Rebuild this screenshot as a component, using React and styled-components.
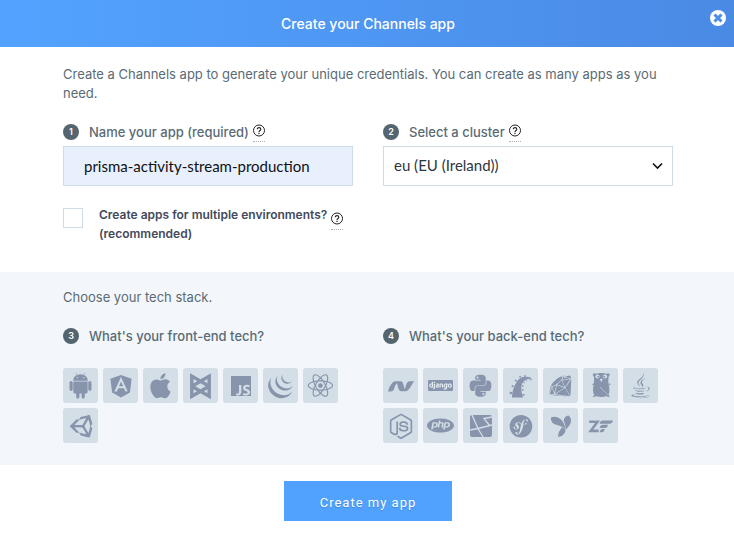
import React from "react";
import styled, { createGlobalStyle } from "styled-components";
import {
  DiAndroid,
  DiAngularSimple,
  DiApple,
  DiBackbone,
  DiJavascript1,
  DiJqueryLogo,
  DiReact,
  DiUnitySmall,
  DiDotnet,
  DiDjango,
  DiPython,
  DiRor,
  DiRuby,
  DiJava,
  DiNodejsSmall,
  DiSymfonyBadge,
  DiYii,
  DiZend,
} from "react-icons/di";
import { SiPhp } from "react-icons/si";

const GlobalStyle = createGlobalStyle`
  * { box-sizing: border-box; }
  body {
    margin: 0;
    background: #fff;
    color: #5a6b75;
    font-family: Inter, "Liberation Sans", sans-serif;
    font-size: 13px;
    line-height: 19px;
  }
`;

const Header = styled.header`
  display: grid;
  grid-template-columns: 40px 1fr 40px;
  align-items: center;
  height: 47px;
  color: #fff;
  background: linear-gradient(90deg, #52a3ff, #4a8ae5);
  box-shadow: 0 1px 2px #dbeafa;
`;

const Title = styled.h1`
  grid-column: 2;
  margin: 0;
  padding-left: 2px;
  text-align: center;
  font-size: 14px;
  font-weight: 500;
  line-height: 20px;
`;

const CloseButton = styled.button`
  align-self: start;
  justify-self: end;
  display: flex;
  margin: 10px 8px 0 0;
  padding: 0;
  border: 0;
  background: none;
  cursor: pointer;
`;

const Section = styled.section`
  padding: ${(p) => (p.$tinted ? "16px 61px 22px 63px" : "18px 61px 29px 63px")};
  background: ${(p) => (p.$tinted ? "#f3f7fb" : "#fff")};
`;

const Intro = styled.p`
  margin: 0;
`;

const Columns = styled.div`
  display: grid;
  grid-template-columns: 1fr 1fr;
  gap: 30px;
  margin-top: 17px;
`;

const FieldHead = styled.div`
  display: flex;
  align-items: center;
  height: 24px;
  margin-bottom: 2px;
`;

const Badge = styled.span`
  display: flex;
  align-items: center;
  justify-content: center;
  width: 16px;
  height: 16px;
  margin-right: 10px;
  border-radius: 50%;
  background: #55656f;
  color: #fff;
  font-size: 9px;
  font-weight: 600;
  line-height: 16px;
`;

const FieldLabel = styled.label`
  font-weight: 500;
`;

const GroupTitle = styled.h2`
  margin: 0;
  font-size: 13px;
  font-weight: 500;
`;

const HelpButton = styled.button`
  display: flex;
  flex: none;
  margin: 2px 0 0 4px;
  padding: 0 0 4px;
  border: 0;
  border-bottom: 1px dotted #a9b4bc;
  background: none;
  cursor: help;
`;

const NameInput = styled.input`
  display: block;
  width: 100%;
  height: 40px;
  padding: 0 20px;
  border: 1px solid #cfdce6;
  border-radius: 0;
  background: #e8f0fe;
  color: #111;
  font-family: Lato, sans-serif;
  font-size: 15px;
`;

const SelectWrap = styled.div`
  display: grid;
  align-items: center;
`;

const ClusterSelect = styled.select`
  grid-area: 1 / 1;
  appearance: none;
  width: 100%;
  height: 40px;
  padding: 0 30px 2px 10px;
  border: 1px solid #cfdce6;
  border-radius: 0;
  background: #fff;
  color: #2d3542;
  font-family: Lato, sans-serif;
  font-size: 15px;
`;

const Chevron = styled.svg`
  grid-area: 1 / 1;
  justify-self: end;
  margin-right: 10px;
  pointer-events: none;
`;

const CheckRow = styled.div`
  display: flex;
  align-items: flex-start;
  margin-top: 19px;
`;

const Checkbox = styled.input`
  appearance: none;
  flex: none;
  width: 20px;
  height: 20px;
  margin: 3px 16px 0 0;
  border: 1px solid #cfdce6;
  background: #fff;
  &:checked { background: #52a3ff; }
`;

const CheckLabel = styled.label`
  color: #434a5c;
  font-size: 12px;
  font-weight: 600;
`;

const HelpSlot = styled.div`
  padding-top: 5px;
`;

const Tiles = styled.div`
  display: flex;
  flex-wrap: wrap;
  gap: 5px;
  margin-top: 20px;
`;

const Tile = styled.button`
  display: flex;
  align-items: center;
  justify-content: center;
  width: 35px;
  height: 35px;
  padding: 0;
  border: 0;
  border-radius: 3px;
  background: #d3dee7;
  color: #8794ab;
  cursor: pointer;
`;

const Footer = styled.footer`
  display: flex;
  justify-content: center;
  padding: 16px 0 14px 2px;
`;

const SubmitButton = styled.button`
  width: 168px;
  height: 40px;
  padding: 3px 0 0;
  border: 0;
  background: #51a2ff;
  color: #fff;
  font-family: Roboto, sans-serif;
  font-size: 13px;
  font-weight: 400;
  letter-spacing: 1px;
  text-shadow: 0 1px 1px #3d86dc;
  cursor: pointer;
`;

const JsIcon = () => (
  <svg width="20" height="20" viewBox="0 0 20 20">
    <path fill="currentColor" d="M0 0h20v20H0z" />
    <DiJavascript1 x="2" y="4" size={20} color="#d3dee7" />
  </svg>
);

const DjangoIcon = () => (
  <svg width="25" height="11" viewBox="0 0 25 11">
    <rect width="25" height="11" rx="1" fill="currentColor" />
    <DiDjango x="1" y="-6" size={23} color="#e3ebf1" />
  </svg>
);

const LaravelIcon = () => (
  <svg width="35" height="35" viewBox="0 0 35 35">
    <rect x="7" y="7" width="22" height="22" rx="2" fill="currentColor" />
    <g fill="none" stroke="#d3dee7" strokeWidth="1.300">
      <path d="M9 7l6 13.500 5 8.500" />
      <path d="M7 22l8-1.500L29 17" />
      <path d="M29 9l-8 1.500 5.500 7" />
    </g>
  </svg>
);

const GopherIcon = () => (
  <svg width="35" height="35" viewBox="0 0 35 35">
    <g fill="currentColor">
      <circle cx="11.500" cy="7" r="1.700" />
      <circle cx="25" cy="7" r="1.700" />
      <path d="M11 9c0-3 3-4 7.200-4s7.300 1 7.300 4c0 3-.5 5 .3 8 .7 4 1.200 8-.8 10-2 2.500-11.500 2.500-13.500 0-2-2.500-1.700-6-.9-10 .6-3 .4-5 .4-8z" />
      <path d="M11 15l-2 1.500 1.500 1M26 15l1.800 1.500-1.500 1M12 26l-2.500 3 3.500-.5M25 26l2 3-3.500-.5" />
    </g>
    <g fill="#d3dee7">
      <circle cx="14.500" cy="8.500" r="2.100" />
      <circle cx="22" cy="8.500" r="2.100" />
      <ellipse cx="18.300" cy="11.500" rx="1.500" ry=".8" />
      <path d="M17.600 12h1.300v1.500h-1.300z" />
    </g>
    <g fill="currentColor">
      <circle cx="15.300" cy="8.700" r=".9" />
      <circle cx="21.300" cy="8.700" r=".9" />
    </g>
    <path d="M17 19l8 8" stroke="#d3dee7" strokeWidth=".5" />
  </svg>
);

const HelpIcon = () => (
  <svg width="12" height="13" viewBox="0 0 12 13" fill="none" stroke="#222">
    <circle cx="6" cy="6.500" r="5.500" />
    <path d="M4.300 5.300c0-2.300 3.500-2.200 3.500-.1C7.800 6.500 6 6.500 6 8" strokeWidth="1.100" />
    <path d="M6 8.800v1.100" strokeWidth="1.200" />
  </svg>
);

const Help = ({ topic }) => (
  <HelpButton type="button" aria-label={`Help: ${topic}`}>
    <HelpIcon />
  </HelpButton>
);

const frontEnd = [
  ["Android", DiAndroid, 27],
  ["Angular", DiAngularSimple, 30],
  ["Apple", DiApple, 31],
  ["Backbone", DiBackbone, 36],
  ["JavaScript", JsIcon],
  ["jQuery", DiJqueryLogo, 36],
  ["React", DiReact, 33],
  ["Unity", DiUnitySmall, 32],
];

const backEnd = [
  [".NET", DiDotnet, 28],
  ["Django", DjangoIcon],
  ["Python", DiPython, 31],
  ["Rails", DiRor, 32],
  ["Ruby", DiRuby, 25],
  ["Go", GopherIcon],
  ["Java", DiJava, 31],
  ["Node.js", DiNodejsSmall, 32],
  ["PHP", SiPhp, 27],
  ["Laravel", LaravelIcon],
  ["Symfony", DiSymfonyBadge, 32],
  ["Yii", DiYii, 22],
  ["Zend", DiZend, 36],
];

const TechGroup = ({ step, title, items }) => (
  <div>
    <FieldHead>
      <Badge>{step}</Badge>
      <GroupTitle>{title}</GroupTitle>
    </FieldHead>
    <Tiles>
      {items.map(([name, Icon, size]) => (
        <Tile key={name} type="button" aria-label={name}>
          <Icon size={size} />
        </Tile>
      ))}
    </Tiles>
  </div>
);

export default function App() {
  return (
    <>
      <GlobalStyle />
      <Header>
        <Title>Create your Channels app</Title>
        <CloseButton type="button" aria-label="Close">
          <svg width="16" height="16" viewBox="0 0 16 16">
            <circle cx="8" cy="8" r="8" fill="#fff" />
            <path d="M4.500 4.500l7 7m0-7l-7 7" stroke="#4a8ce8" strokeWidth="3" />
          </svg>
        </CloseButton>
      </Header>
      <Section>
        <Intro>
          Create a Channels app to generate your unique credentials. You can create as many apps as you need.
        </Intro>
        <Columns>
          <div>
            <FieldHead>
              <Badge>1</Badge>
              <FieldLabel htmlFor="app-name">Name your app (required)</FieldLabel>
              <Help topic="app name" />
            </FieldHead>
            <NameInput id="app-name" defaultValue="prisma-activity-stream-production" />
            <CheckRow>
              <Checkbox id="multi-env" type="checkbox" />
              <CheckLabel htmlFor="multi-env">
                Create apps for multiple environments?
                <br />
                (recommended)
              </CheckLabel>
              <HelpSlot>
                <Help topic="multiple environments" />
              </HelpSlot>
            </CheckRow>
          </div>
          <div>
            <FieldHead>
              <Badge>2</Badge>
              <FieldLabel htmlFor="cluster">Select a cluster</FieldLabel>
              <Help topic="cluster" />
            </FieldHead>
            <SelectWrap>
              <ClusterSelect id="cluster">
                <option>eu (EU (Ireland))</option>
              </ClusterSelect>
              <Chevron width="11" height="8" viewBox="0 0 11 8" fill="none" stroke="#111" strokeWidth="1.600">
                <path d="M1 1.500l4.500 4.500L10 1.500" />
              </Chevron>
            </SelectWrap>
          </div>
        </Columns>
      </Section>
      <Section $tinted>
        <Intro>Choose your tech stack.</Intro>
        <Columns>
          <TechGroup step="3" title="What's your front-end tech?" items={frontEnd} />
          <TechGroup step="4" title="What's your back-end tech?" items={backEnd} />
        </Columns>
      </Section>
      <Footer>
        <SubmitButton type="submit">Create my app</SubmitButton>
      </Footer>
    </>
  );
}
